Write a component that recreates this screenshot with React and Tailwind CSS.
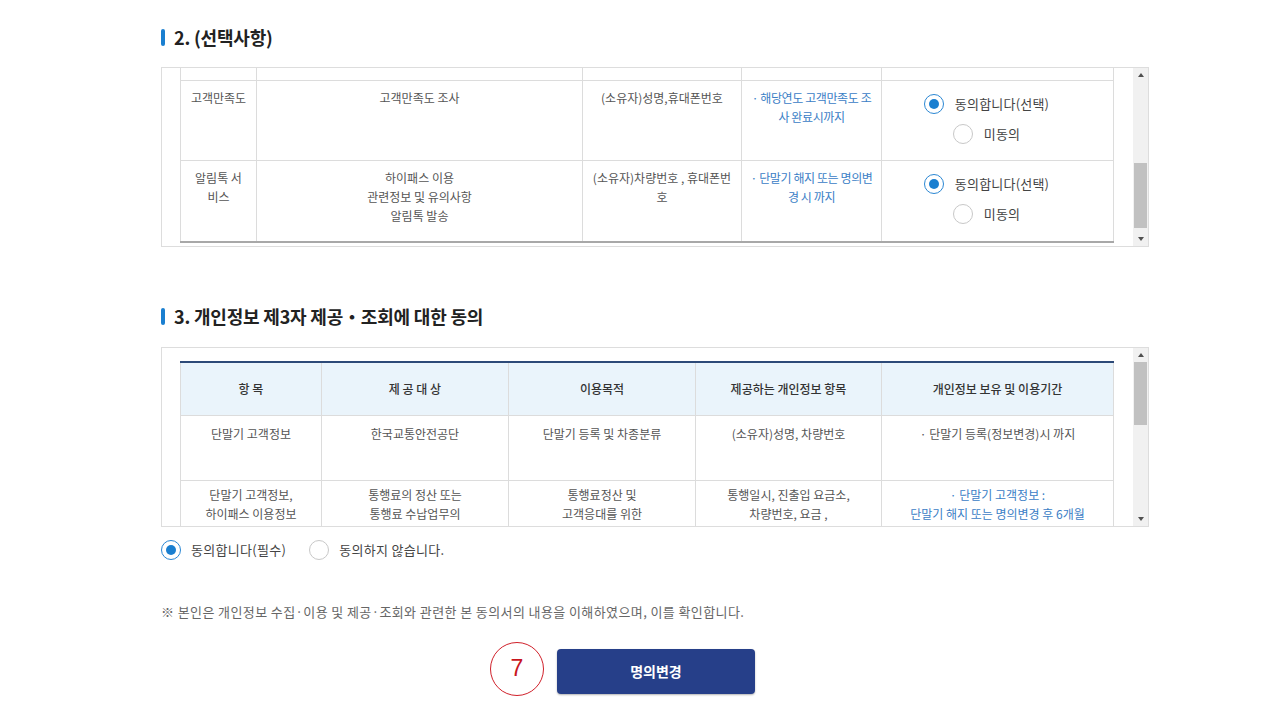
import React from 'react';

const Radio = ({ checked }) => (
    <span
        className={
            'inline-flex items-center justify-center w-[20px] h-[20px] rounded-full bg-white shrink-0 ' +
            (checked ? 'border-[1.5px] border-[#2b87d3]' : 'border border-[#c8c8c8]')
        }
    >
        {checked && <span className="w-[10px] h-[10px] rounded-full bg-[#1a7fd0]" />}
    </span>
);

const Heading = ({ children }) => (
    <div className="flex items-center gap-[9px] h-[22px]">
        <span className="w-[4px] h-[17px] rounded-[2px] bg-[#1a7fd0]" />
        <h2 className="text-[18px] font-bold text-[#222] tracking-[-0.2px]">{children}</h2>
    </div>
);

// fake scrollbar: top spacer and thumb height in px
const Scrollbar = ({ before, thumb }) => (
    <div className="w-[15px] flex flex-col bg-[#f1f1f1] self-stretch">
        <div className="h-[14px] flex items-center justify-center">
            <span className="w-0 h-0 border-l-[3.5px] border-r-[3.5px] border-b-[4px] border-l-transparent border-r-transparent border-b-[#505050]" />
        </div>
        <div className="flex-1 flex flex-col px-[1px]">
            <div style={{ height: before }} />
            <div className="bg-[#c1c1c1]" style={{ height: thumb }} />
        </div>
        <div className="h-[14px] flex items-center justify-center">
            <span className="w-0 h-0 border-l-[3.5px] border-r-[3.5px] border-t-[4px] border-l-transparent border-r-transparent border-t-[#505050]" />
        </div>
    </div>
);

const td = 'border border-[#dcdcdc] align-top text-center px-[8px] pt-[7px] text-[12px] leading-[19px] text-[#555]';
const tdBlue = 'border border-[#dcdcdc] align-top text-center px-[2px] pt-[7px] text-[12px] leading-[19px] text-[#3b80c6] whitespace-nowrap tracking-[-0.4px]';

const ConsentCell = () => (
    <td className="border border-[#dcdcdc] align-top text-center pt-[13px] pr-[22px] text-[13px] text-[#444]">
        <div className="flex flex-col items-center gap-[10px]">
            <label className="flex items-center gap-[11px] h-[20px]">
                <Radio checked />
                <span className="tracking-[0.2px]">동의합니다(선택)</span>
            </label>
            <label className="flex items-center gap-[11px] h-[20px]">
                <Radio />
                <span className="tracking-[0.2px]">미동의</span>
            </label>
        </div>
    </td>
);

const Optional = () => (
    <div className="flex h-[180px] border border-[#dddddd]">
        <div className="flex-1 overflow-hidden pl-[18px] pr-[20px]">
            <table className="w-[933px] table-fixed border-collapse -mt-[28px] border-b-[2px] border-b-[#a8a8a8]">
                <colgroup>
                    <col className="w-[76px]" />
                    <col className="w-[326px]" />
                    <col className="w-[159px]" />
                    <col className="w-[140px]" />
                    <col className="w-[232px]" />
                </colgroup>
                <tbody>
                    <tr className="h-[40px]">
                        <td className="border border-[#dcdcdc]" />
                        <td className="border border-[#dcdcdc]" />
                        <td className="border border-[#dcdcdc]" />
                        <td className="border border-[#dcdcdc]" />
                        <td className="border border-[#dcdcdc]" />
                    </tr>
                    <tr className="h-[80px]">
                        <td className={td}>고객만족도</td>
                        <td className={td}>고객만족도 조사</td>
                        <td className={td}>(소유자)성명,휴대폰번호</td>
                        <td className={tdBlue}>· 해당연도 고객만족도 조<br />사 완료시까지</td>
                        <ConsentCell />
                    </tr>
                    <tr className="h-[81px]">
                        <td className={td}>알림톡 서<br />비스</td>
                        <td className={td}>하이패스 이용<br />관련정보 및 유의사항<br />알림톡 발송</td>
                        <td className={td}>(소유자)차량번호 , 휴대폰번<br />호</td>
                        <td className={tdBlue}>· 단말기 해지 또는 명의변<br />경 시 까지</td>
                        <ConsentCell />
                    </tr>
                </tbody>
            </table>
        </div>
        <Scrollbar before={81} thumb={65} />
    </div>
);

const th = 'border-x border-[#dcdcdc] bg-[#eaf4fb] text-center text-[12px] font-medium text-[#333]';
const td3 = 'border border-[#dcdcdc] align-top text-center px-[8px] pt-[8px] text-[12px] leading-[19px] text-[#555]';
const td3b = 'border border-[#dcdcdc] align-top text-center px-[8px] pt-[4px] text-[12px] leading-[19px] text-[#555]';
const td3Blue = 'border border-[#dcdcdc] align-top text-center px-[4px] pt-[4px] text-[12px] leading-[19px] text-[#3b80c6]';

const ThirdParty = () => (
    <div className="flex h-[180px] border border-[#dddddd]">
        <div className="flex-1 overflow-hidden pl-[18px] pr-[20px] pt-[13px]">
            <table className="w-[933px] table-fixed border-collapse">
                <colgroup>
                    <col className="w-[141px]" />
                    <col className="w-[187px]" />
                    <col className="w-[187px]" />
                    <col className="w-[186px]" />
                    <col className="w-[232px]" />
                </colgroup>
                <thead>
                    <tr className="h-[53px] border-t-[2px] border-t-[#2d4a78]">
                        <th className={th}>항 목</th>
                        <th className={th}>제 공 대 상</th>
                        <th className={th}>이용목적</th>
                        <th className={th}>제공하는 개인정보 항목</th>
                        <th className={th}>개인정보 보유 및 이용기간</th>
                    </tr>
                </thead>
                <tbody>
                    <tr className="h-[65px]">
                        <td className={td3}>단말기 고객정보</td>
                        <td className={td3}>한국교통안전공단</td>
                        <td className={td3}>단말기 등록 및 차종분류</td>
                        <td className={td3}>(소유자)성명, 차량번호</td>
                        <td className={td3}>· 단말기 등록(정보변경)시 까지</td>
                    </tr>
                    <tr className="h-[90px]">
                        <td className={td3b}>단말기 고객정보,<br />하이패스 이용정보</td>
                        <td className={td3b}>통행료의 정산 또는<br />통행료 수납업무의</td>
                        <td className={td3b}>통행료정산 및<br />고객응대를 위한</td>
                        <td className={td3b}>통행일시, 진출입 요금소,<br />차량번호, 요금 ,</td>
                        <td className={td3Blue}>· 단말기 고객정보 :<br />단말기 해지 또는 명의변경 후 6개월</td>
                    </tr>
                </tbody>
            </table>
        </div>
        <Scrollbar before={0} thumb={63} />
    </div>
);

const App = () => {
    return (
        <div className="w-[1280px] h-[720px] bg-white font-['Noto_Sans_CJK_KR','Noto_Sans',sans-serif] overflow-hidden">
            <div className="ml-[161px] w-[988px] pt-[26px]">
                <Heading>2. (선택사항)</Heading>
                <div className="mt-[19px]">
                    <Optional />
                </div>

                <div className="mt-[58px]">
                    <Heading>3. 개인정보 제3자 제공・조회에 대한 동의</Heading>
                </div>
                <div className="mt-[20px]">
                    <ThirdParty />
                </div>

                <div className="mt-[13px] flex items-center text-[13px] text-[#444] tracking-[0.3px]">
                    <label className="flex items-center gap-[10px]">
                        <Radio checked />
                        <span>동의합니다(필수)</span>
                    </label>
                    <label className="flex items-center gap-[10px] ml-[23px]">
                        <Radio />
                        <span>동의하지 않습니다.</span>
                    </label>
                </div>

                <p className="mt-[42px] text-[13px] text-[#666] tracking-[0.4px]">
                    ※ 본인은 개인정보 수집·이용 및 제공·조회와 관련한 본 동의서의 내용을 이해하였으며, 이를 확인합니다.
                </p>

                <div className="mt-[20px] flex items-start justify-center gap-[13px] pr-[1px]">
                    <div className="w-[54px] h-[54px] rounded-full border border-[#d0202a] flex items-center justify-center text-[23px] text-[#c8161e] font-['Liberation_Sans',sans-serif] ml-[-64px]">
                        7
                    </div>
                    <button className="mt-[7px] w-[198px] h-[45px] rounded-[4px] bg-[#263f89] text-white text-[14px] font-bold shadow-[0_1px_2px_rgba(0,0,0,0.3)]">
                        명의변경
                    </button>
                </div>
            </div>
        </div>
    );
};

export default App;
